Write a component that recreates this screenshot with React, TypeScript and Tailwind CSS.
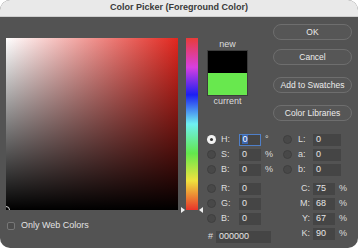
import React from "react";

const font = { fontFamily: '"Liberation Sans", Arial, sans-serif' };

function Radio({ on }: { on?: boolean }) {
  return on ? (
    <div className="w-[9px] h-[9px] rounded-full bg-[#f2f2f2] flex items-center justify-center shrink-0">
      <div className="w-[3px] h-[3px] rounded-full bg-[#333]" />
    </div>
  ) : (
    <div className="w-[9px] h-[9px] rounded-full bg-[#484848] border border-[#3f3f3f] shrink-0" />
  );
}

function Input({ w, v, focus }: { w: string; v: string; focus?: boolean }) {
  return focus ? (
    <div className={`${w} h-[12px] bg-[#454545] border border-[#4f7fc8] flex items-center pl-[2px] shrink-0`}>
      <span className="bg-[#3a66b0] text-white leading-[9px] px-[0.5px]">{v}</span>
    </div>
  ) : (
    <div className={`${w} h-[12px] bg-[#454545] flex items-center pl-[3px] text-[#e6e6e6] shrink-0`}>{v}</div>
  );
}

function LeftRow({ label, value, unit, on, focus }: { label: string; value: string; unit?: string; on?: boolean; focus?: boolean }) {
  return (
    <div className="h-[15px] flex items-center">
      <Radio on={on} />
      <div className="ml-[5px] w-[18px] text-[#dedede]">{label}</div>
      <Input w="w-[22px]" v={value} focus={focus} />
      {unit && <div className="ml-[4px] text-[#dedede]">{unit}</div>}
    </div>
  );
}

function LabRow({ label, value }: { label: string; value: string }) {
  return (
    <div className="h-[15px] flex items-center">
      <Radio />
      <div className="ml-[6px] w-[15px] text-[#dedede]">{label}</div>
      <Input w="w-[28px]" v={value} />
    </div>
  );
}

function CmykRow({ label, value }: { label: string; value: string }) {
  return (
    <div className="h-[15px] flex items-center">
      <div className="w-[27px] text-right text-[#dedede]">{label}</div>
      <div className="ml-[3px]">
        <Input w="w-[22px]" v={value} />
      </div>
      <div className="ml-[4px] text-[#dedede]">%</div>
    </div>
  );
}

function Btn({ children, cls }: { children: React.ReactNode; cls?: string }) {
  return (
    <div className={`w-[79px] h-[16px] rounded-full border border-[#6e6e6e] bg-[#565656] flex items-center justify-center text-[8.5px] text-[#ececec] ${cls ?? ""}`}>
      {children}
    </div>
  );
}

export default function App() {
  return (
    <div className="w-[360px] h-[250px] bg-white overflow-hidden" style={font}>
      <div className="w-[358px] h-[248px] rounded-[10px] overflow-hidden bg-[#535353] flex flex-col text-[9px]">
        <div className="h-[17px] bg-[#e9e9e9] flex items-center justify-center font-bold text-[9px] text-[#3a3a3a] border-b border-[#cfcfcf]">
          Color Picker (Foreground Color)
        </div>
        <div className="flex-1 flex">
          <div className="pl-[6px] pt-[21px] flex flex-col">
            <div
              className="w-[172px] h-[172px] relative overflow-hidden"
              style={{
                background:
                  "linear-gradient(to top, #000 0%, rgba(0,0,0,0) 100%), linear-gradient(to right, #ffffff 0%, #e2271f 100%)",
              }}
            >
              <div className="absolute left-[-4px] bottom-[-4px] w-[8px] h-[8px] rounded-full border border-[#d8d8d8]" />
            </div>
            <div className="mt-[10px] h-[12px] flex items-center ml-[1px]">
              <div className="w-[8px] h-[8px] rounded-[2px] border border-[#777] bg-[#4c4c4c]" />
              <div className="ml-[6px] text-[#e2e2e2]">Only Web Colors</div>
            </div>
          </div>
          <div className="ml-[8px] mt-[21px] w-[12px] h-[172px] relative">
            <div
              className="w-full h-full"
              style={{
                background:
                  "linear-gradient(to bottom, #e83c38 0%, #d83fe0 17%, #1c1ff2 33%, #6ff0f2 50%, #62e84c 67%, #f0e23e 83%, #e8342a 100%)",
              }}
            />
            <div className="absolute left-[-5px] bottom-[-3px] w-0 h-0 border-y-[3px] border-y-transparent border-l-[4px] border-l-[#eeeeee]" />
            <div className="absolute right-[-5px] bottom-[-3px] w-0 h-0 border-y-[3px] border-y-transparent border-r-[4px] border-r-[#eeeeee]" />
          </div>
          <div className="ml-[9px] flex flex-col">
            <div className="flex">
              <div className="w-[41px] pt-[22px] flex flex-col items-center text-[#dcdcdc]">
                <div className="h-[11px] leading-[11px]">new</div>
                <div className="w-[41px] h-[46px] border border-[#3c3c3c] flex flex-col">
                  <div className="flex-1 bg-black" />
                  <div className="flex-1 bg-[#68e84e]" />
                </div>
                <div className="h-[11px] leading-[11px]">current</div>
              </div>
              <div className="ml-[25px] pt-[7px] flex flex-col">
                <Btn>OK</Btn>
                <Btn cls="mt-[9px]">Cancel</Btn>
                <Btn cls="mt-[12px]">Add to Swatches</Btn>
                <Btn cls="mt-[12px]">Color Libraries</Btn>
              </div>
            </div>
            <div className="mt-[11px] flex">
              <div className="w-[76px] flex flex-col">
                <LeftRow label="H:" value="0" unit="°" on focus />
                <LeftRow label="S:" value="0" unit="%" />
                <LeftRow label="B:" value="0" unit="%" />
                <div className="mt-[4px]">
                  <LeftRow label="R:" value="0" />
                  <LeftRow label="G:" value="0" />
                  <LeftRow label="B:" value="0" />
                </div>
                <div className="mt-[3px] h-[15px] flex items-center">
                  <div className="ml-[1px] w-[8px] text-[#dedede]">#</div>
                  <Input w="w-[55px]" v="000000" />
                </div>
              </div>
              <div className="flex flex-col">
                <LabRow label="L:" value="0" />
                <LabRow label="a:" value="0" />
                <LabRow label="b:" value="0" />
                <div className="mt-[4px]">
                  <CmykRow label="C:" value="75" />
                  <CmykRow label="M:" value="68" />
                  <CmykRow label="Y:" value="67" />
                  <CmykRow label="K:" value="90" />
                </div>
              </div>
            </div>
          </div>
        </div>
      </div>
    </div>
  );
}
